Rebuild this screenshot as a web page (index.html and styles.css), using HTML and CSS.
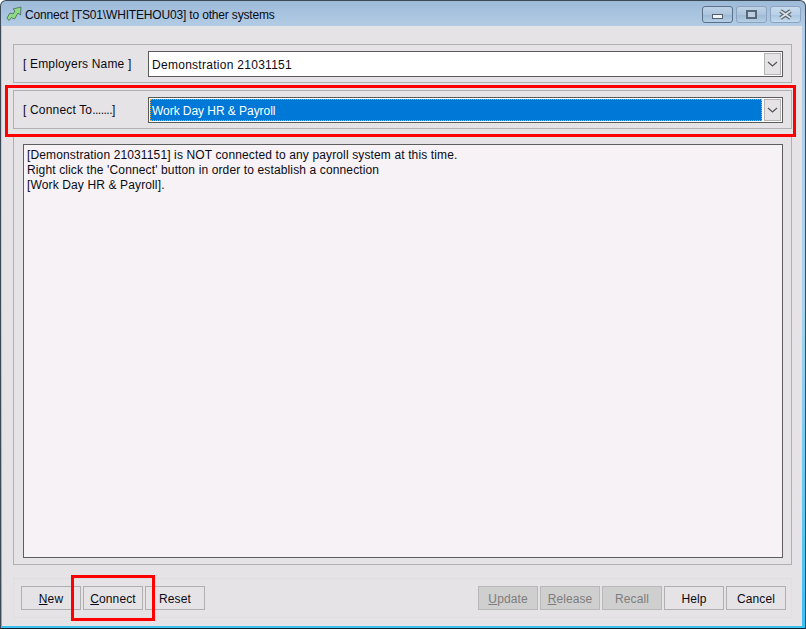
FILE: index.html
```html
<!DOCTYPE html>
<html lang="en">
<head>
<meta charset="utf-8">
<title>Connect to other systems</title>
<link rel="stylesheet" href="styles.css">
</head>
<body>
<div class="window">
  <header class="titlebar">
    <svg class="app-icon" width="16" height="15" viewBox="0 0 16 15">
      <path d="M1 12 L4 7 L7 8 L9 5 L7 3 L15 1 L14.5 9 L12 7 L8.5 13 L5.5 11.5 L3 14.5 Z" fill="#8fdc84" stroke="#587a68" stroke-width="1" stroke-linejoin="round"/>
    </svg>
    <span class="title">Connect [TS01\WHITEHOU03] to other systems</span>
    <div class="controls">
      <div class="ctl ctl-min"><span class="glyph-min"></span></div>
      <div class="ctl ctl-max"><span class="glyph-max"></span></div>
      <div class="ctl ctl-close">
        <svg width="15" height="11" viewBox="0 0 15 11"><path d="M2.5 2 L12.5 9 M12.5 2 L2.5 9" stroke="#5a6570" stroke-width="4" fill="none"/><path d="M2.5 2 L12.5 9 M12.5 2 L2.5 9" stroke="#dbe2e8" stroke-width="1.6" fill="none"/></svg>
      </div>
    </div>
  </header>
  <main class="client">
    <section class="group">
      <label class="field-label">[ Employers Name ]</label>
      <div class="combo">
        <span class="combo-value">Demonstration 21031151</span>
        <span class="combo-btn"><svg width="11" height="6" viewBox="0 0 11 6"><path d="M1 1 L5.5 5 L10 1" stroke="#555" stroke-width="1.2" fill="none"/></svg></span>
      </div>
    </section>
    <section class="group group-second">
      <label class="field-label">[ Connect To<span class="dots">.......</span>]</label>
      <div class="combo">
        <span class="combo-value selected">Work Day HR &amp; Payroll</span>
        <span class="combo-btn"><svg width="11" height="6" viewBox="0 0 11 6"><path d="M1 1 L5.5 5 L10 1" stroke="#555" stroke-width="1.2" fill="none"/></svg></span>
      </div>
    </section>
    <section class="memo-panel">
      <div class="memo">[Demonstration 21031151] is NOT connected to any payroll system at this time.<br>Right click the 'Connect' button in order to establish a connection<br>[Work Day HR &amp; Payroll].</div>
    </section>
    <footer class="actions">
      <div class="btn-set">
        <button class="btn"><u>N</u>ew</button>
        <button class="btn"><u>C</u>onnect</button>
        <button class="btn">Reset</button>
      </div>
      <div class="btn-set">
        <button class="btn disabled"><u>U</u>pdate</button>
        <button class="btn disabled"><u>R</u>elease</button>
        <button class="btn disabled">Recall</button>
        <button class="btn">Help</button>
        <button class="btn">Cancel</button>
      </div>
    </footer>
  </main>
  <div class="mark mark-combo"></div>
  <div class="mark mark-connect"></div>
</div>
</body>
</html>
```
FILE: styles.css
```css
* { box-sizing: border-box; }
html, body { margin: 0; padding: 0; }
body { width: 806px; height: 629px; overflow: hidden; background: #fff; font-family: "Liberation Sans", Arial, sans-serif; font-size: 12px; color: #000; }
.window {
  position: relative; width: 806px; height: 629px;
  display: flex; flex-direction: column;
  background: linear-gradient(180deg, #9dbad8 0, #b4cde6 26px, #a8d4f0 300px, #3cc0f2 100%);
  border: 1px solid #3c4a58; border-bottom-color: #10202c;
  border-radius: 6px 6px 0 0;
  padding: 0 3px 2px 1px;
}
.titlebar { height: 25px; flex: none; display: flex; align-items: center; padding-left: 4px; padding-top: 2px; }
.app-icon { flex: none; margin-right: 3px; margin-top: -2px; }
.title { font-size: 12px; letter-spacing: -0.17px; color: #0a0a14; flex: 1; white-space: nowrap; }
.controls { display: flex; align-self: flex-start; gap: 3px; margin-right: 1px; margin-top: 3px; }
.ctl { height: 17px; display: flex; align-items: center; justify-content: center; border: 1px solid #8ba3bf; border-radius: 3px; background: linear-gradient(180deg, #bed2e6 0, #adc5dd 50%, #9cb8d4 51%, #b6cee6 100%); }
.ctl-min { width: 31px; border-color: #5a7088; }
.ctl-max { width: 31px; }
.ctl-close { width: 31px; background: linear-gradient(180deg, #c8dbee 0, #b8d0e8 50%, #a8c4e0 51%, #c4daee 100%); }
.glyph-min { display: block; width: 11px; height: 5px; margin-top: 3px; background: #f2f4f6; border: 1px solid #4f5f72; }
.glyph-max { display: block; width: 11px; height: 9px; border: 2px solid #57677a; background: #bccee0; }
.client { flex: 1; background: #e6e3e6; padding: 18px 10px 8px 11px; display: flex; flex-direction: column; }
.group { height: 39px; flex: none; display: flex; align-items: center; border: 1px solid #b0b0b0; padding: 0 8px 0 9px; }
.group-second { margin-top: 7px; }
.field-label { width: 125px; flex: none; font-size: 12px; color: #0a0a14; letter-spacing: 0.17px; }
.dots { letter-spacing: -0.5px; }
.combo { flex: 1; height: 26px; display: flex; background: #fff; border: 1px solid #5a5a5a; }
.combo-value { flex: 1; padding: 1px 3px 0; line-height: 24px; font-size: 12px; letter-spacing: 0.28px; color: #0a0a14; }
.combo-value.selected { background: #0078d7; color: #fff; outline: 1px dotted #e8a040; outline-offset: -1px; margin: 1px; line-height: 23px; padding-left: 2px; letter-spacing: -0.05px; }
.combo-btn { width: 17px; flex: none; margin: 1px; background: #e6e3e6; border: 1px solid #b4b4b4; display: flex; align-items: center; justify-content: center; }
.memo-panel { flex: 1; margin-top: 7px; border: 1px solid #b0b0b0; border-top-color: #d8d8d8; padding: 7px 8px 6px 9px; display: flex; }
.memo { flex: 1; background: #f6f2f6; border: 1px solid #5e5e5e; padding: 3px 3px; font-size: 12px; letter-spacing: 0.13px; line-height: 15px; color: #0a0a14; }
.actions { margin-top: 13px; height: 40px; flex: none; border: 1px solid #e0dfe0; display: flex; justify-content: space-between; align-items: center; padding: 0 5px 0 7px; }
.btn-set { display: flex; gap: 2px; }
.btn { width: 60px; height: 24px; padding: 2px 0 0; font-family: inherit; font-size: 12px; letter-spacing: 0.1px; color: #0a0a14; background: #e6e3e6; border: 1px solid #b0b0b0; border-radius: 0; }
.btn.disabled { background: #cfcfcf; color: #7d7d7d; border-color: #b8b8b8; }
.mark { position: absolute; border: 3px solid #f00; pointer-events: none; }
.mark-combo { left: 4px; top: 84px; width: 791px; height: 52px; }
.mark-connect { left: 70px; top: 574px; width: 84px; height: 46px; }
```
